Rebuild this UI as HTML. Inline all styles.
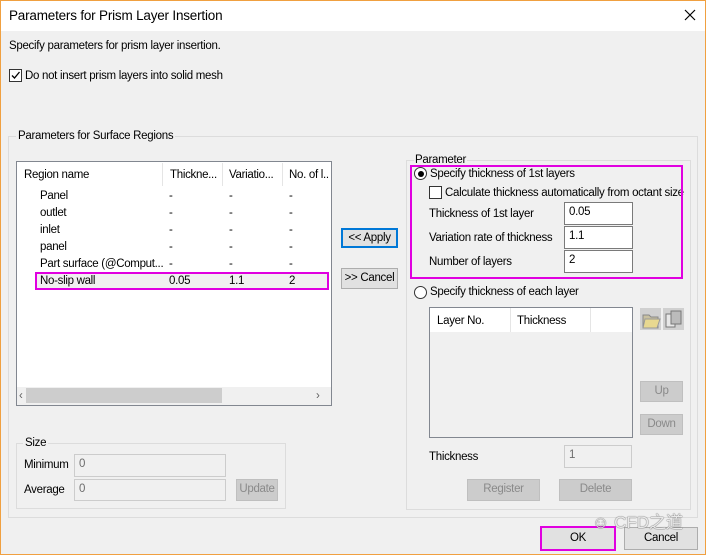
<!DOCTYPE html>
<html><head><meta charset="utf-8"><style>
*{box-sizing:border-box;margin:0;padding:0}
body{width:706px;height:555px;overflow:hidden;background:#f0f0f0;font-family:"Liberation Sans","Noto Sans CJK SC",sans-serif;font-size:11.5px;letter-spacing:-0.3px;color:#000;position:relative}
.a{position:absolute;white-space:nowrap}
.t{position:absolute;white-space:nowrap;line-height:14px}
.box{position:absolute;border:1px solid #dcdcdc}
.inp{position:absolute;background:#fff;border:1px solid #7a7a7a;padding:2px 4px;line-height:15px}
.dis{position:absolute;background:#f0f0f0;border:1px solid #ccc;color:#6d6d6d;padding:2px 4px;line-height:15px}
.btn{position:absolute;background:#e1e1e1;border:1px solid #adadad;text-align:center;line-height:18px}
.dbtn{position:absolute;background:#cccccc;border:1px solid #bfbfbf;color:#8a8a8a;text-align:center;line-height:19px}
.cb{position:absolute;width:13px;height:13px;border:1px solid #333;background:#fff}
.rd{position:absolute;width:13px;height:13px;border:1px solid #333;border-radius:50%;background:#fff}
.mg{position:absolute;border:2px solid #e000e0}
</style></head><body>
<div class="a" style="left:0;top:0;width:706px;height:31px;background:#fff"></div>
<div class="a" style="left:0;top:0;width:1px;height:555px;background:#f0a040"></div>
<div class="a" style="left:705px;top:0;width:1px;height:555px;background:#f0a040"></div>
<div class="a" style="left:0;top:554px;width:706px;height:1px;background:#f0a040"></div>
<div class="a" style="left:0;top:0;width:706px;height:1px;background:#f0a040"></div>
<div class="t" style="left:9px;top:8px;font-size:13.5px;letter-spacing:-0.2px;line-height:16px">Parameters for Prism Layer Insertion</div>
<svg class="a" style="left:684px;top:9px" width="12" height="12"><path d="M1 1L11 11M11 1L1 11" stroke="#000" stroke-width="1.2"/></svg>

<div class="t" style="left:9px;top:39px">Specify parameters for prism layer insertion.</div>
<div class="cb" style="left:9px;top:69px"></div>
<svg class="a" style="left:10px;top:70px" width="11" height="11"><path d="M2 5.5L4.5 8L9.5 2" stroke="#000" stroke-width="1.3" fill="none"/></svg>
<div class="t" style="left:25px;top:69px">Do not insert prism layers into solid mesh</div>

<div class="box" style="left:8px;top:136px;width:690px;height:382px"></div>
<div class="t" style="left:16px;top:129px;background:#f0f0f0;padding:0 2px">Parameters for Surface Regions</div>

<div class="a" style="left:16px;top:161px;width:316px;height:245px;background:#fff;border:1px solid #828790"></div>
<div class="a" style="left:162px;top:163px;width:1px;height:23px;background:#e5e5e5"></div>
<div class="a" style="left:222px;top:163px;width:1px;height:23px;background:#e5e5e5"></div>
<div class="a" style="left:282px;top:163px;width:1px;height:23px;background:#e5e5e5"></div>
<div class="t" style="left:24px;top:168px">Region name</div>
<div class="t" style="left:170px;top:168px">Thickne...</div>
<div class="t" style="left:229px;top:168px">Variatio...</div>
<div class="t" style="left:289px;top:168px">No. of l..</div>
<div class="a" style="left:36px;top:272px;width:292px;height:17px;background:#f0f0f0"></div>
<div class="t" style="left:40px;top:189px">Panel</div><div class="t" style="left:169px;top:189px">-</div><div class="t" style="left:229px;top:189px">-</div><div class="t" style="left:289px;top:189px">-</div>
<div class="t" style="left:40px;top:206px">outlet</div><div class="t" style="left:169px;top:206px">-</div><div class="t" style="left:229px;top:206px">-</div><div class="t" style="left:289px;top:206px">-</div>
<div class="t" style="left:40px;top:223px">inlet</div><div class="t" style="left:169px;top:223px">-</div><div class="t" style="left:229px;top:223px">-</div><div class="t" style="left:289px;top:223px">-</div>
<div class="t" style="left:40px;top:240px">panel</div><div class="t" style="left:169px;top:240px">-</div><div class="t" style="left:229px;top:240px">-</div><div class="t" style="left:289px;top:240px">-</div>
<div class="t" style="left:40px;top:257px">Part surface (@Comput...</div><div class="t" style="left:169px;top:257px;background:#fff">-</div><div class="t" style="left:229px;top:257px">-</div><div class="t" style="left:289px;top:257px">-</div>
<div class="t" style="left:40px;top:274px">No-slip wall</div><div class="t" style="left:169px;top:274px">0.05</div><div class="t" style="left:229px;top:274px">1.1</div><div class="t" style="left:289px;top:274px">2</div>
<div class="mg" style="left:35px;top:272px;width:294px;height:18px"></div>
<div class="a" style="left:17px;top:387px;width:314px;height:18px;background:#f0f0f0"></div>
<div class="a" style="left:26px;top:388px;width:196px;height:15px;background:#cdcdcd"></div>
<div class="t" style="left:19px;top:389px;color:#606060">‹</div>
<div class="t" style="left:316px;top:389px;color:#606060">›</div>

<div class="btn" style="left:341px;top:228px;width:57px;height:20px;border:2px solid #0078d7;line-height:16px">&lt;&lt; Apply</div>
<div class="btn" style="left:341px;top:268px;width:57px;height:21px">&gt;&gt; Cancel</div>

<div class="box" style="left:406px;top:160px;width:285px;height:350px"></div>
<div class="t" style="left:414px;top:153px;background:#f0f0f0;padding:0 1px">Parameter</div>
<div class="rd" style="left:414px;top:167px"></div>
<div class="a" style="left:417.5px;top:170.5px;width:6px;height:6px;border-radius:50%;background:#000"></div>
<div class="t" style="left:430px;top:167px">Specify thickness of 1st layers</div>
<div class="cb" style="left:429px;top:186px"></div>
<div class="t" style="left:445px;top:186px">Calculate thickness automatically from octant size</div>
<div class="t" style="left:429px;top:207px">Thickness of 1st layer</div>
<div class="t" style="left:429px;top:231px">Variation rate of thickness</div>
<div class="t" style="left:429px;top:255px">Number of layers</div>
<div class="inp" style="left:564px;top:202px;width:69px;height:23px">0.05</div>
<div class="inp" style="left:564px;top:226px;width:69px;height:23px">1.1</div>
<div class="inp" style="left:564px;top:250px;width:69px;height:23px">2</div>
<div class="mg" style="left:410px;top:165px;width:273px;height:114px"></div>
<div class="rd" style="left:414px;top:286px"></div>
<div class="t" style="left:430px;top:285px">Specify thickness of each layer</div>

<div class="a" style="left:429px;top:307px;width:204px;height:131px;background:#f0f0f0;border:1px solid #828790"></div>
<div class="a" style="left:430px;top:308px;width:202px;height:24px;background:#fff"></div>
<div class="a" style="left:510px;top:308px;width:1px;height:24px;background:#e5e5e5"></div>
<div class="a" style="left:590px;top:308px;width:1px;height:24px;background:#e5e5e5"></div>
<div class="t" style="left:437px;top:314px">Layer No.</div>
<div class="t" style="left:517px;top:314px">Thickness</div>
<svg class="a" style="left:640px;top:308px" width="45" height="22">
<rect x="0" y="0" width="21" height="22" fill="#d0d0d0"/><rect x="23" y="0" width="21" height="22" fill="#d0d0d0"/>
<path d="M3 7h6l2 2h7v11H3z" fill="#c8c0a0" stroke="#888"/><path d="M5 11h15l-3 9H3z" fill="#e8d890" stroke="#999"/>
<rect x="26" y="6" width="9" height="13" fill="#e8e8e8" stroke="#777"/><rect x="31" y="3" width="10" height="13" fill="#bbb" stroke="#777"/>
</svg>
<div class="dbtn" style="left:640px;top:381px;width:43px;height:21px">Up</div>
<div class="dbtn" style="left:640px;top:414px;width:43px;height:21px">Down</div>
<div class="t" style="left:429px;top:450px">Thickness</div>
<div class="dis" style="left:564px;top:445px;width:68px;height:23px">1</div>
<div class="dbtn" style="left:467px;top:479px;width:73px;height:22px">Register</div>
<div class="dbtn" style="left:559px;top:479px;width:73px;height:22px">Delete</div>

<div class="box" style="left:16px;top:443px;width:270px;height:66px"></div>
<div class="t" style="left:23px;top:436px;background:#f0f0f0;padding:0 2px">Size</div>
<div class="t" style="left:24px;top:458px">Minimum</div>
<div class="t" style="left:24px;top:483px">Average</div>
<div class="dis" style="left:74px;top:454px;width:152px;height:23px">0</div>
<div class="dis" style="left:74px;top:479px;width:152px;height:22px">0</div>
<div class="dbtn" style="left:236px;top:479px;width:42px;height:22px">Update</div>

<div class="btn" style="left:541px;top:527px;width:74px;height:23px;line-height:21px">OK</div>
<div class="mg" style="left:540px;top:526px;width:76px;height:25px"></div>
<div class="btn" style="left:624px;top:527px;width:74px;height:23px;line-height:21px">Cancel</div>
<div class="t" style="left:592px;top:513px;color:rgba(255,255,255,0.85);font-size:17px;letter-spacing:0;line-height:20px;text-shadow:0 0 1px #666,0 0 1px #666">☺ CFD之道</div>
</body></html>
